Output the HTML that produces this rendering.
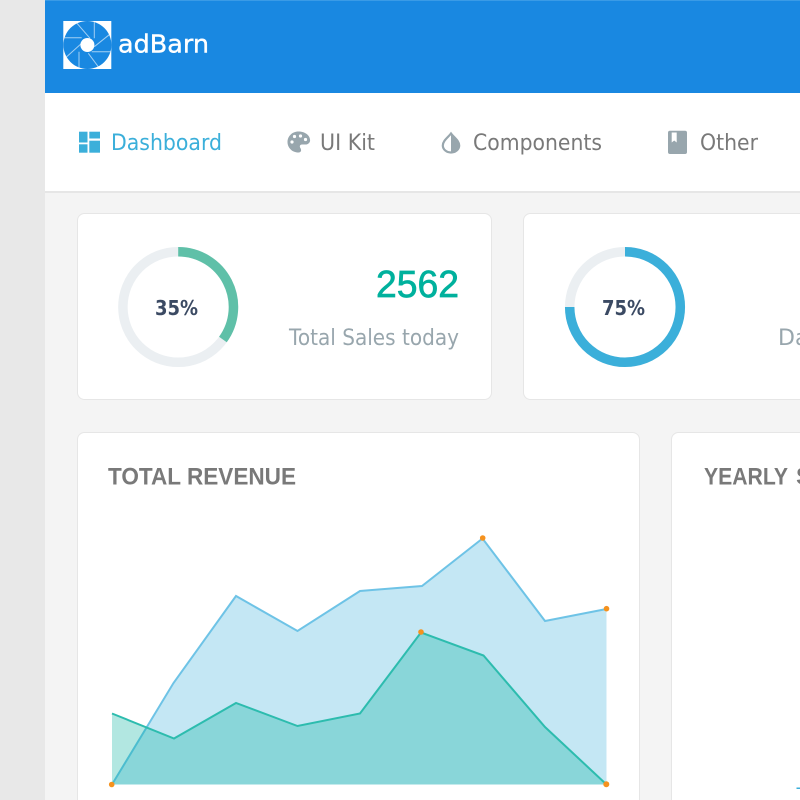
<!DOCTYPE html>
<html>
<head>
<meta charset="utf-8">
<style>
html,body{margin:0;padding:0;width:800px;height:800px;overflow:hidden;background:#f4f4f4}
svg{display:block;filter:blur(.3px)}
.o{font-family:"DejaVu Sans",sans-serif}
.l{font-family:"Liberation Sans",sans-serif}
</style>
</head>
<body>
<svg width="800" height="800" viewBox="0 0 800 800" xmlns="http://www.w3.org/2000/svg">
  <defs><clipPath id="c"><circle cx="87.4" cy="45" r="24"/></clipPath></defs>
  <rect width="800" height="800" fill="#f4f4f4"/>
  <rect x="0" y="0" width="45" height="800" fill="#e8e8e8"/>

  <!-- header -->
  <rect x="45" y="0" width="755" height="93" fill="#1988e1"/>
  <rect x="45" y="0" width="755" height="1" fill="#3a9be6"/>

  <!-- logo -->
  <rect x="63.3" y="21" width="48" height="48" fill="#fff"/>
  <circle cx="87.4" cy="45" r="24" fill="#1988e1"/>
  <g stroke="#fff" stroke-opacity=".6" stroke-width="1" fill="none" clip-path="url(#c)">
    <path d="M75 21L90 38.3"/>
    <path d="M63 37.7H81.7"/>
    <path d="M94.3 21V38.3"/>
    <path d="M111 33.3L94.3 46.7"/>
    <path d="M91.7 51.7H112"/>
    <path d="M88.3 53.3L100 69"/>
    <path d="M79 69V51.7"/>
    <path d="M65 58.3L81.7 43.3"/>
  </g>
  <circle cx="87.4" cy="45" r="7" fill="#fff"/>
  <text x="118" y="52.5" class="o" font-size="25" fill="#fff" stroke="#fff" stroke-width=".4" textLength="91" lengthAdjust="spacingAndGlyphs">adBarn</text>

  <!-- nav -->
  <rect x="45" y="93" width="755" height="98" fill="#fff"/>
  <rect x="45" y="191" width="755" height="2" fill="#e6e6e6"/>

  <g fill="#3bafda">
    <rect x="79" y="131.7" width="8.5" height="10.8"/>
    <rect x="79" y="144.3" width="8.5" height="8.4"/>
    <rect x="89.3" y="131.7" width="10.7" height="6.8"/>
    <rect x="89.3" y="140.7" width="10.7" height="12"/>
  </g>
  <text x="111" y="150" class="o" font-size="22" fill="#3bafda" textLength="111" lengthAdjust="spacingAndGlyphs">Dashboard</text>

  <path d="M298.3 131.5c-6 0-10.8 4.7-10.8 10.5s4.8 10.5 10.8 10.5c1.8 0 2.8-1 2.8-2.4 0-1.6-1.3-2.3-1.3-3.6 0-1.2 1-2 2.3-2h3.2c3 0 4.8-2 4.8-4.3 0-4.8-5-8.7-11.8-8.7z" fill="#98a6ad"/>
  <g fill="#fff">
    <circle cx="292" cy="142" r="1.6"/>
    <circle cx="294.5" cy="136.5" r="1.6"/>
    <circle cx="300.5" cy="136" r="1.6"/>
    <circle cx="305.5" cy="139.5" r="1.6"/>
  </g>
  <text x="320" y="150" class="o" font-size="22" fill="#797979" textLength="55" lengthAdjust="spacingAndGlyphs">UI Kit</text>

  <path d="M451 133.5c3 4 8.2 7.2 8.2 12a8.2 7 0 0 1-16.4 0c0-4.8 5.2-8 8.2-12z" fill="#fff" stroke="#98a6ad" stroke-width="2.2"/>
  <path d="M451 133.5v19a8.2 7 0 0 0 8.2-7c0-4.8-5.2-8-8.2-12z" fill="#98a6ad"/>
  <text x="473" y="150" class="o" font-size="22" fill="#797979" textLength="129" lengthAdjust="spacingAndGlyphs">Components</text>

  <rect x="668" y="130.7" width="19" height="23.3" rx="2" fill="#98a6ad"/>
  <path d="M671.7 132.5h5v10l-2.5-2-2.5 2z" fill="#fff"/>
  <text x="700" y="150" class="o" font-size="22" fill="#797979" textLength="58" lengthAdjust="spacingAndGlyphs">Other</text>

  <!-- stat cards -->
  <rect x="77.5" y="213.5" width="414" height="186" rx="7" fill="#fff" stroke="#e6e6e6"/>
  <rect x="523.5" y="213.5" width="300" height="186" rx="7" fill="#fff" stroke="#e6e6e6"/>

  <circle cx="178.2" cy="307" r="55.3" fill="none" stroke="#ebeff2" stroke-width="9.5"/>
  <path d="M178.2 251.7A55.3 55.3 0 0 1 222.9 339.5" fill="none" stroke="#5fc0a8" stroke-width="9.5"/>
  <text x="155" y="315" class="o" font-size="20" font-weight="bold" fill="#3b4a63" textLength="43" lengthAdjust="spacingAndGlyphs">35%</text>
  <text x="376" y="297" class="l" font-size="38" fill="#00b19d" stroke="#00b19d" stroke-width=".7" textLength="83" lengthAdjust="spacingAndGlyphs">2562</text>
  <text x="289" y="345" class="o" font-size="22" fill="#98a6ad" textLength="170" lengthAdjust="spacingAndGlyphs">Total Sales today</text>

  <circle cx="625" cy="307" r="55.3" fill="none" stroke="#ebeff2" stroke-width="9.5"/>
  <path d="M625 251.7A55.3 55.3 0 1 1 569.7 307" fill="none" stroke="#3bafda" stroke-width="9.5"/>
  <text x="602" y="315" class="o" font-size="20" font-weight="bold" fill="#3b4a63" textLength="43" lengthAdjust="spacingAndGlyphs">75%</text>
  <text x="778" y="345" class="o" font-size="22" fill="#98a6ad">Da</text>

  <!-- chart cards -->
  <rect x="77.5" y="432.5" width="562" height="400" rx="7" fill="#fff" stroke="#e6e6e6"/>
  <rect x="671.5" y="432.5" width="200" height="400" rx="7" fill="#fff" stroke="#e6e6e6"/>

  <text x="108" y="484.5" class="l" font-size="24" font-weight="bold" fill="#797979" textLength="188" lengthAdjust="spacingAndGlyphs">TOTAL REVENUE</text>
  <text x="704" y="484.5" class="l" font-size="24" font-weight="bold" fill="#797979" textLength="84" lengthAdjust="spacingAndGlyphs">YEARLY</text>
  <text x="796" y="484.5" class="l" font-size="24" font-weight="bold" fill="#797979">S</text>

  <!-- chart -->
  <path d="M112 784.5L173.5 683L236 596L297.5 631L360 591L422 586L482.5 538.5L545 621L606.5 609V784.5Z" fill="#3bafda" fill-opacity=".3"/>
  <path d="M112 784.5L173.5 683L236 596L297.5 631L360 591L422 586L482.5 538.5L545 621L606.5 609" fill="none" stroke="#6ec3e6" stroke-width="2"/>
  <path d="M112 713.5L174 738.5L236 703L297.5 726L360 713.5L421 632.5L483.5 655.5L545 727L606.5 784.5H112Z" fill="#00b19d" fill-opacity=".3"/>
  <path d="M112 713.5L174 738.5L236 703L297.5 726L360 713.5L421 632.5L483.5 655.5L545 727L606.5 784.5" fill="none" stroke="#2dbcae" stroke-width="2"/>
  <g fill="#f5921e">
    <circle cx="111.7" cy="784.5" r="2.8"/>
    <circle cx="482.7" cy="538" r="2.8"/>
    <circle cx="606.5" cy="608.7" r="2.8"/>
    <circle cx="421" cy="632" r="2.8"/>
    <circle cx="606.3" cy="784.3" r="3"/>
  </g>

  <rect x="796.5" y="787.5" width="3.5" height="1.5" fill="#3bafda"/>
</svg>
</body>
</html>
